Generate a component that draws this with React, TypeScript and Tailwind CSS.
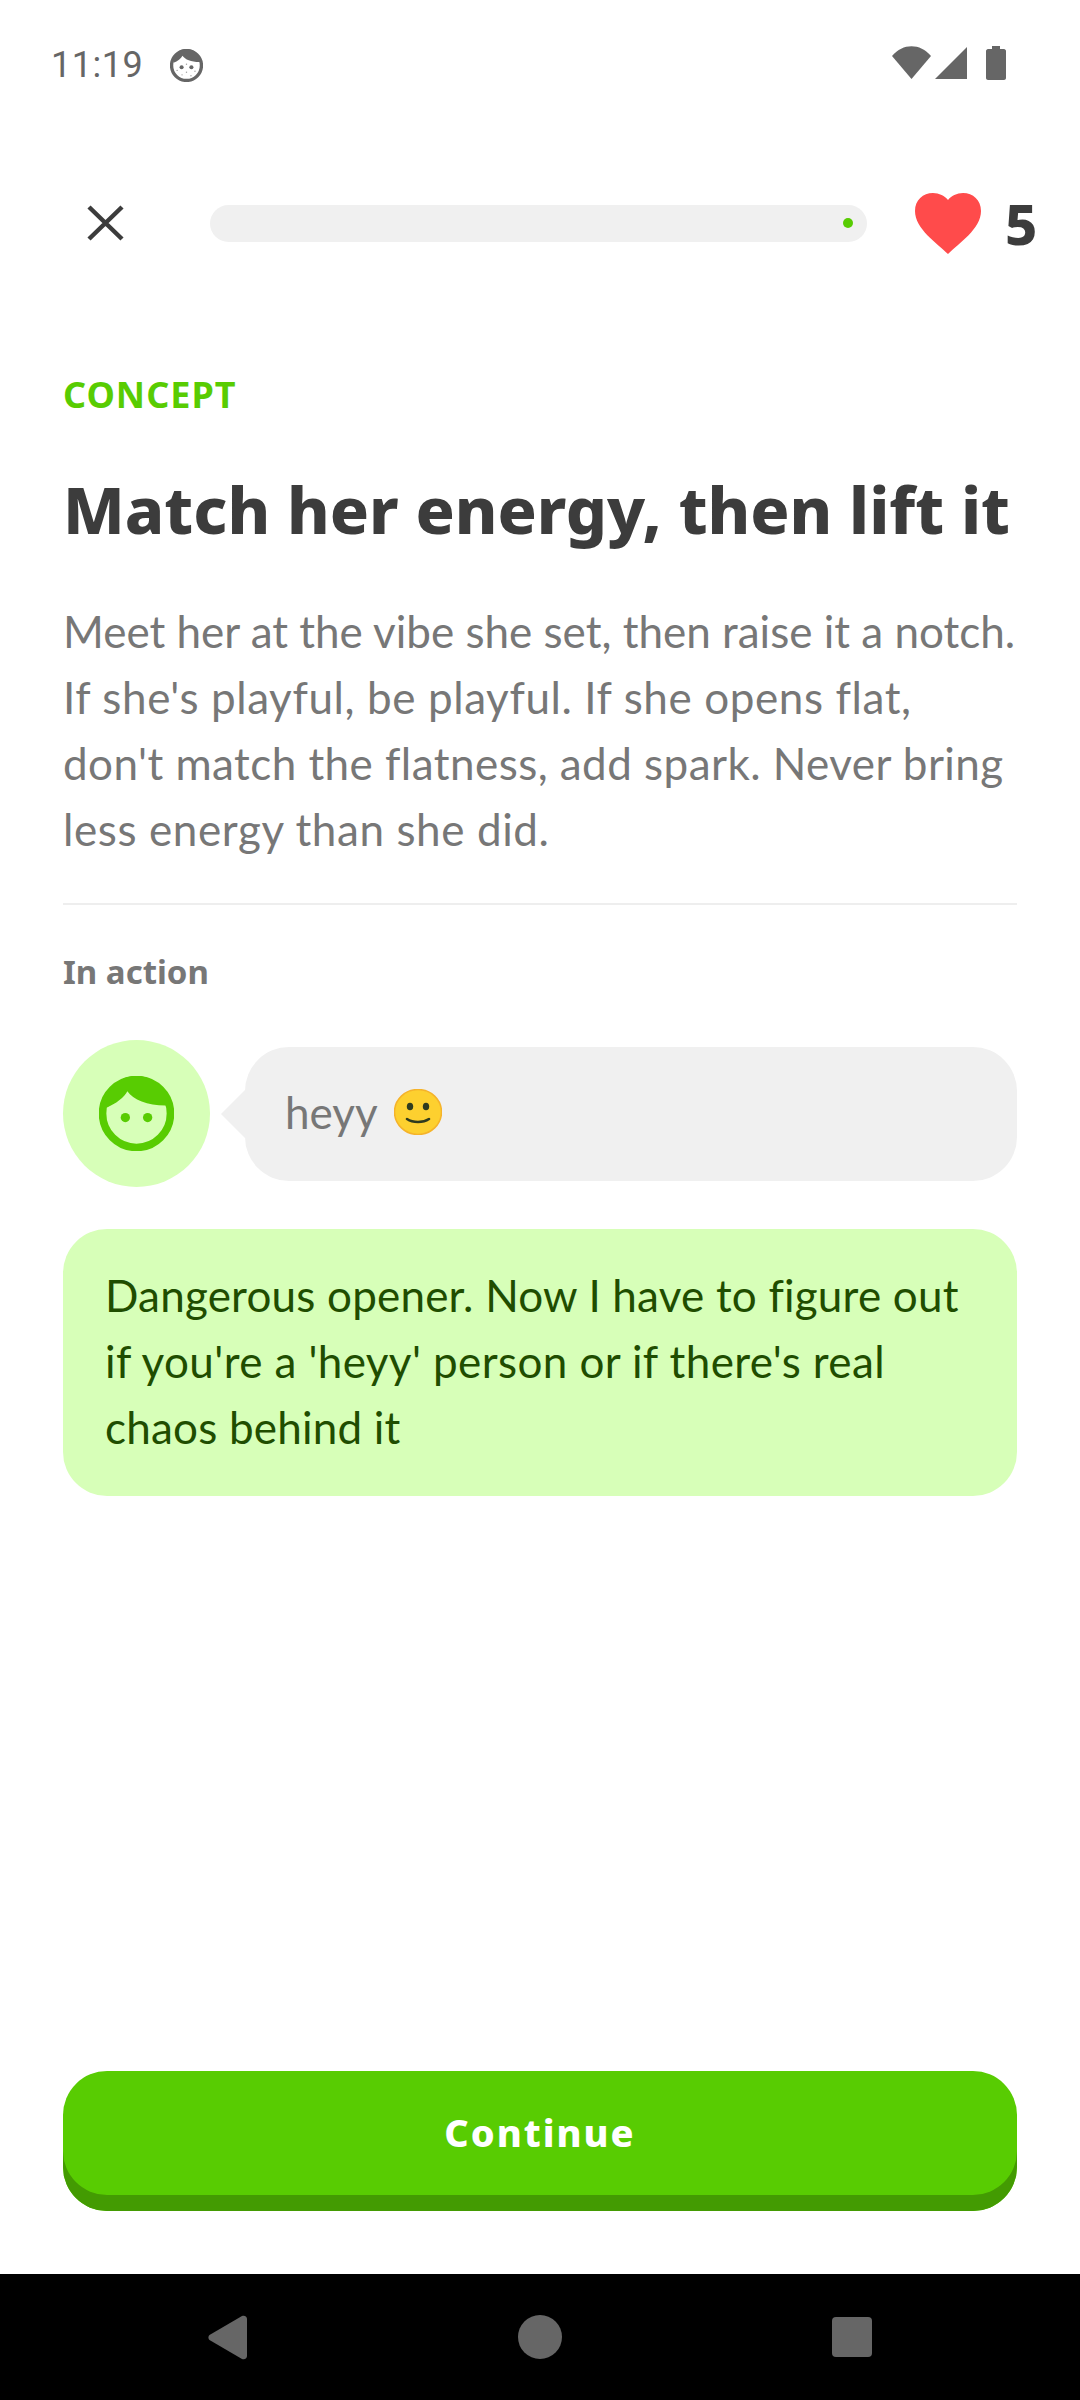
const FaceIcon = ({ size, color, freckles }: { size: number; color: string; freckles?: boolean }) => (
  <svg width={size} height={size} viewBox="0 0 74 74">
    <circle cx="37" cy="37" r="33.5" fill="none" stroke={color} strokeWidth="7.5" />
    <path d="M8 31C17 27 25 21 28 15C34 24 50 30 70 29C67 12 53 0 37 0C20 0 6 13 8 31Z" fill={color} />
    <circle cx="26" cy="41" r="4.6" fill={color} />
    <circle cx="48" cy="41" r="4.6" fill={color} />
    {freckles && (
      <g fill={color} opacity="0.6">
        <circle cx="16" cy="48" r="1.6" />
        <circle cx="37" cy="34" r="1.6" />
        <circle cx="37" cy="52" r="1.6" />
        <circle cx="56" cy="50" r="1.6" />
        <circle cx="27" cy="58" r="1.6" />
        <circle cx="47" cy="60" r="1.6" />
      </g>
    )}
  </svg>
);

const SmileEmoji = () => (
  <svg width="48" height="46" viewBox="0 0 48 46" className="ml-[16px]">
    <ellipse cx="24" cy="23" rx="23.500" ry="22.500" fill="#fdd02f" stroke="#f5b32a" strokeWidth="1.5" />
    <ellipse cx="16" cy="17.500" rx="3.200" ry="3.800" fill="#2f3b1f" />
    <ellipse cx="32" cy="17.500" rx="3.200" ry="3.800" fill="#2f3b1f" />
    <path d="M13 30C19 34 29 34 35 30" fill="none" stroke="#2f3b1f" strokeWidth="2.600" strokeLinecap="round" />
  </svg>
);

const StatusBar = () => (
  <div className="h-[130px] flex items-start justify-between pt-[46px] pl-[51px] pr-[74px] shrink-0">
    <div className="flex items-center">
      <span className="text-[36px] leading-[38px] text-[#666666] tracking-[0.5px]" style={{ fontFamily: "Roboto, sans-serif" }}>
        11:19
      </span>
      <span className="ml-[27px]">
        <FaceIcon size={33} color="#666666" freckles />
      </span>
    </div>
    <div className="flex items-center gap-[4px]">
      <svg width="39" height="34" viewBox="0 0 39 34">
        <path d="M0 10C11 -3 28 -3 39 10L19.500 33Z" fill="#666666" />
      </svg>
      <svg width="32" height="34" viewBox="0 0 32 34" className="mr-[15px]">
        <path d="M32 1V33H0Z" fill="#666666" />
      </svg>
      <svg width="20" height="34" viewBox="0 0 20 34">
        <path d="M6 0H14V3H18C19 3 20 4 20 5V32C20 33 19 34 18 34H2C1 34 0 33 0 32V5C0 4 1 3 2 3H6Z" fill="#666666" />
      </svg>
    </div>
  </div>
);

const NavBar = () => (
  <div className="h-[126px] bg-black flex items-center justify-center shrink-0">
    <div className="w-[664px] flex items-center justify-between">
      <svg width="39" height="45" viewBox="0 0 39 45">
        <path d="M34 1L1.500 20C0 21 0 24 1.500 25L34 44C37 45 39 43 39 41V4C39 2 37 0 34 1Z" fill="#666666" />
      </svg>
      <div className="w-[44px] h-[44px] rounded-full bg-[#666666]" />
      <div className="w-[40px] h-[40px] rounded-[4px] bg-[#666666]" />
    </div>
  </div>
);

export default function App() {
  return (
    <div className="w-[1080px] h-[2400px] bg-white flex flex-col overflow-hidden" style={{ fontFamily: '"Noto Sans", sans-serif' }}>
      <StatusBar />

      <div className="flex-1 flex flex-col">
        {/* top row */}
        <div className="flex items-center h-[72px] mt-[57px] pl-[87px]">
          <svg width="37" height="36" viewBox="0 0 37 36">
            <path d="M2 2L35 34M35 2L2 34" fill="none" stroke="#3c3c3c" strokeWidth="4.500" />
          </svg>
          <div className="ml-[86px] w-[657px] h-[37px] rounded-full bg-[#f0f0f0] flex items-center justify-end pr-[14px]">
            <div className="w-[10px] h-[10px] rounded-full bg-[#58cc02]" />
          </div>
          <svg width="66" height="61" viewBox="0 0 66 61" className="ml-[48px]">
            <path d="M33 61C22 50 0 36 0 18C0 7 8 0 18 0C24 0 30 3 33 7C36 3 42 0 48 0C58 0 66 7 66 18C66 36 44 50 33 61Z" fill="#ff4b4b" />
          </svg>
          <span className="ml-[24px] text-[56px] leading-none font-extrabold text-[#3c3c3c]">5</span>
        </div>

        <div className="px-[63px] flex-1 flex flex-col">
          <div className="mt-[113px] text-[36px] leading-[46px] font-bold tracking-[1px] text-[#58cc02]">CONCEPT</div>
          <h1 className="mt-[49px] text-[64.8px] leading-[84px] font-extrabold text-[#3c3c3c] whitespace-nowrap">Match her energy, then lift it</h1>
          <div className="mt-[47px] text-[44px] leading-[66px] text-[#777777]" style={{ fontFamily: "Lato, sans-serif" }}>
            <p className="whitespace-nowrap">Meet her at the vibe she set, then raise it a notch.</p>
            <p className="whitespace-nowrap tracking-[0.6px]">If she's playful, be playful. If she opens flat,</p>
            <p className="whitespace-nowrap tracking-[0.45px]">don't match the flatness, add spark. Never bring</p>
            <p className="whitespace-nowrap tracking-[0.6px]">less energy than she did.</p>
          </div>

          <div className="mt-[41px] h-[2px] bg-[#eeeeee]" />

          <div className="mt-[44px] text-[33px] leading-[46px] font-bold text-[#777777]">In action</div>

          <div className="mt-[45px] flex items-center">
            <div className="w-[147px] h-[147px] rounded-full bg-[#d7ffb8] flex items-center justify-center shrink-0">
              <FaceIcon size={75} color="#58cc02" />
            </div>
            <div className="relative ml-[35px] flex-1 h-[134px] rounded-[44px] bg-[#f0f0f0] flex items-center pl-[40px] pb-[4px]" style={{ fontFamily: "Lato, sans-serif" }}>
              <div className="absolute left-[-24px] top-[43px] w-0 h-0 border-y-[24px] border-y-transparent border-r-[24px] border-r-[#f0f0f0]" />
              <span className="text-[44px] leading-[66px] text-[#777777]">heyy</span>
              <SmileEmoji />
            </div>
          </div>

          <div className="mt-[42px] rounded-[44px] bg-[#d7ffb8] px-[42px] pt-[33px] pb-[36px] text-[44px] leading-[66px] text-[#1f4d00]" style={{ fontFamily: "Lato, sans-serif" }}>
            <p className="whitespace-nowrap tracking-[0.2px]">Dangerous opener. Now I have to figure out</p>
            <p className="whitespace-nowrap tracking-[0.4px]">if you're a 'heyy' person or if there's real</p>
            <p className="whitespace-nowrap tracking-[0.2px]">chaos behind it</p>
          </div>

          <button className="mt-auto mb-[63px] h-[140px] rounded-[44px] bg-[#58cc02] shadow-[inset_0_-16px_0_0_#439b02] pb-[18px] text-[38px] font-extrabold tracking-[2px] text-white">
            Continue
          </button>
        </div>
      </div>

      <NavBar />
    </div>
  );
}
